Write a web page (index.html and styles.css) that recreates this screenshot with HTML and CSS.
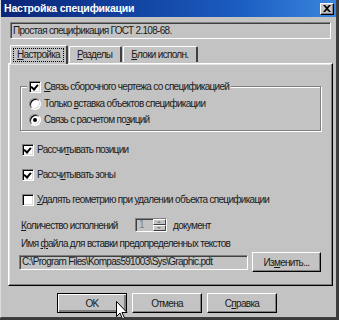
FILE: index.html
```html
<!DOCTYPE html>
<html lang="ru">
<head>
    <meta charset="UTF-8">
    <title>Настройка спецификации</title>
    <link rel="stylesheet" href="styles.css">
</head>
<body>
    <div class="window">
        <div class="titlebar">
            <span class="title">Настройка спецификации</span>
            <span class="close-button">
                <svg width="8" height="7" viewBox="0 0 8 7"><path d="M0 0h2l2 2 2-2h2L5 3.5 8 7H6L4 5 2 7H0l3-3.5z" fill="#000"/></svg>
            </span>
        </div>

        <div class="dialog-body">
            <div class="field spec-field">Простая спецификация ГОСТ 2.108-68.</div>

            <div class="tabs">
                <div class="tab active"><span class="focus"><u>Н</u>астройка</span></div>
                <div class="tab"><u>Р</u>азделы</div>
                <div class="tab"><u>Б</u>локи исполн.</div>
            </div>

            <div class="panel">
                <fieldset class="group">
                    <legend class="option">
                        <span class="checkbox checked"></span>
                        <span><u>С</u>вязь сборочного чертежа со спецификацией</span>
                    </legend>
                    <div class="option radio-row">
                        <span class="radio"></span>
                        <span>Только <u>в</u>ставка объектов спецификации</span>
                    </div>
                    <div class="option radio-row second">
                        <span class="radio selected"></span>
                        <span>Связь с расчетом по<u>з</u>иций</span>
                    </div>
                </fieldset>

                <div class="option check-row">
                    <span class="checkbox checked"></span>
                    <span>Рассчи<u>т</u>ывать позиции</span>
                </div>
                <div class="option check-row">
                    <span class="checkbox checked"></span>
                    <span>Рассч<u>и</u>тывать зоны</span>
                </div>
                <div class="option check-row">
                    <span class="checkbox"></span>
                    <span><u>У</u>далять геометрию при удалении объекта спецификации</span>
                </div>

                <div class="count-row">
                    <span class="count-label"><u>К</u>оличество исполнений</span>
                    <span class="spinner">
                        <span class="spinner-value">1</span>
                        <span class="spinner-arrows">
                            <span class="arrow up"></span>
                            <span class="arrow down"></span>
                        </span>
                    </span>
                    <span>документ</span>
                </div>

                <div class="file-label">Имя <u>ф</u>айла для вставки предопределенных текстов</div>
                <div class="file-row">
                    <div class="field path-field">C:\Program Files\Kompas591003\Sys\Graphic.pdt</div>
                    <div class="button change-button">Из<u>м</u>енить...</div>
                </div>
            </div>

            <div class="buttons">
                <div class="button default">OK</div>
                <div class="button">Отмена</div>
                <div class="button">С<u>п</u>равка</div>
            </div>
        </div>

        <svg class="cursor" width="12" height="19" viewBox="0 0 12 19">
            <path d="M0.5 0.5v15l3.5-3.5 2.5 6 2-1-2.5-5.5h5z" fill="#fff" stroke="#000" stroke-width="1"/>
        </svg>
    </div>
</body>
</html>
```

FILE: styles.css
```css
* {
    margin: 0;
    padding: 0;
    box-sizing: border-box;
}

body {
    font-family: "Liberation Sans", Arial, sans-serif;
    font-size: 10px;
    letter-spacing: -0.7px;
    line-height: 13px;
    color: #1a1a1a;
    background: #3a3a3a;
}

u {
    text-decoration: underline;
    text-underline-offset: 1px;
}

.window {
    position: relative;
    width: 337px;
    height: 318px;
    background: #c3c3c3;
    border-left: 1px solid #dcdcdc;
    border-right: 1px solid #404040;
    border-bottom: 1px solid #404040;
}

.titlebar {
    height: 17px;
    display: flex;
    align-items: center;
    justify-content: space-between;
    padding: 0 2px 0 3px;
    background: linear-gradient(to right, #0a2478, #1a5cc0 70%, #3a86dc);
}

.title {
    color: #fff;
    font-weight: bold;
    font-size: 10.5px;
    letter-spacing: -0.2px;
}

.close-button {
    width: 14px;
    height: 12px;
    display: flex;
    align-items: center;
    justify-content: center;
    background: #c3c3c3;
    border-top: 1px solid #fff;
    border-left: 1px solid #fff;
    border-right: 1px solid #000;
    border-bottom: 1px solid #000;
    box-shadow: inset -1px -1px #808080;
}

.dialog-body {
    padding: 5px 0 0 6px;
}

.field {
    height: 17px;
    padding: 0 2px;
    line-height: 13px;
    white-space: nowrap;
    overflow: hidden;
    border-top: 1px solid #808080;
    border-left: 1px solid #808080;
    border-right: 1px solid #fff;
    border-bottom: 1px solid #fff;
    box-shadow: inset 1px 1px #404040;
    background: #c3c3c3;
}

.spec-field {
    width: 321px;
    margin-left: 3px;
    padding-top: 1px;
}

.tabs {
    display: flex;
    align-items: flex-end;
    height: 19px;
    margin-top: 5px;
    padding-left: 3px;
    position: relative;
    z-index: 1;
}

.tab {
    height: 16px;
    margin-bottom: 1px;
    padding: 1px 8px 0 7px;
    border-top: 1px solid #fff;
    border-left: 1px solid #fff;
    border-right: 2px solid #404040;
    border-radius: 2px 2px 0 0;
    white-space: nowrap;
}

.tab + .tab {
    margin-left: 1px;
}

.tab.active {
    height: 19px;
    margin-bottom: -1px;
    padding: 2px 2px 0;
    background: #c3c3c3;
}

.focus {
    display: inline-block;
    padding: 0 3px;
    border: 1px dotted #000;
    line-height: 12px;
}

.panel {
    width: 325px;
    height: 223px;
    margin-left: 1px;
    padding: 16px 9px 0 11px;
    border-top: 1px solid #fff;
    border-left: 1px solid #fff;
    border-right: 1px solid #000;
    border-bottom: 1px solid #000;
    box-shadow: inset -1px -1px #808080, inset 1px 1px #e4e4e4;
}

.option {
    display: flex;
    align-items: center;
    gap: 3px;
    height: 13px;
    white-space: nowrap;
}

.group {
    width: 301px;
    padding: 0 0 4px 8px;
    border: 1px solid #808080;
    box-shadow: inset 1px 1px #fff, 1px 1px #fff;
}

.group legend {
    margin-left: -2px;
    padding: 0 2px;
    background: #c3c3c3;
}

.radio-row {
    margin-top: 4px;
}

.radio-row.second {
    margin-top: 3px;
}

.checkbox {
    width: 12px;
    height: 12px;
    flex: none;
    position: relative;
    background: #fff;
    border-top: 1px solid #808080;
    border-left: 1px solid #808080;
    border-right: 1px solid #fff;
    border-bottom: 1px solid #fff;
    box-shadow: inset 1px 1px #000, inset -1px -1px #dcdcdc;
}

.checkbox.checked::after {
    content: "";
    position: absolute;
    left: 2px;
    top: 1px;
    width: 3px;
    height: 5px;
    border-right: 2px solid #000;
    border-bottom: 2px solid #000;
    transform: rotate(40deg);
}

.radio {
    width: 12px;
    height: 12px;
    flex: none;
    border-radius: 50%;
    background: #fff;
    border: 1px solid;
    border-color: #808080 #fff #fff #808080;
    box-shadow: inset 1px 1px #000, inset -1px -1px #dcdcdc;
    position: relative;
}

.radio.selected::after {
    content: "";
    position: absolute;
    left: 3px;
    top: 3px;
    width: 4px;
    height: 4px;
    border-radius: 50%;
    background: #000;
}

.check-row {
    margin-left: 2px;
    margin-top: 12px;
}

.check-row + .check-row {
    margin-top: 12px;
}

.count-row {
    display: flex;
    align-items: center;
    height: 14px;
    margin: 12px 0 0 1px;
    white-space: nowrap;
}

.count-label {
    width: 114px;
}

.spinner {
    display: flex;
    width: 32px;
    height: 14px;
    margin-right: 6px;
    border-top: 1px solid #808080;
    border-left: 1px solid #808080;
    border-right: 1px solid #fff;
    border-bottom: 1px solid #fff;
    box-shadow: inset 1px 1px #404040;
}

.spinner-value {
    flex: 1;
    padding-left: 3px;
    color: #808080;
    line-height: 12px;
}

.spinner-arrows {
    display: flex;
    flex-direction: column;
    width: 13px;
}

.arrow {
    flex: 1;
    position: relative;
    border-top: 1px solid #fff;
    border-left: 1px solid #fff;
    border-right: 1px solid #404040;
    border-bottom: 1px solid #404040;
}

.arrow::after {
    content: "";
    position: absolute;
    left: 3px;
    top: 1px;
    border-left: 2px solid transparent;
    border-right: 2px solid transparent;
}

.arrow.up::after {
    border-bottom: 2px solid #808080;
}

.arrow.down::after {
    border-top: 2px solid #808080;
}

.file-label {
    margin: 5px 0 0 1px;
    white-space: nowrap;
}

.file-row {
    display: flex;
    align-items: center;
    gap: 4px;
    height: 20px;
    margin: 2px 0 0 -1px;
}

.path-field {
    width: 229px;
    height: 15px;
    line-height: 12px;
}

.button {
    display: flex;
    align-items: center;
    justify-content: center;
    height: 20px;
    background: #c3c3c3;
    border-top: 1px solid #fff;
    border-left: 1px solid #fff;
    border-right: 1px solid #000;
    border-bottom: 1px solid #000;
    box-shadow: inset -1px -1px #808080;
    white-space: nowrap;
}

.change-button {
    width: 69px;
}

.buttons {
    display: flex;
    gap: 5px;
    margin: 7px 0 0 50px;
}

.buttons .button {
    width: 70px;
}

.button.default {
    border: 1px solid #000;
    box-shadow: inset 1px 1px #fff, inset -2px -2px #808080, inset -1px -1px #000;
}

.cursor {
    position: absolute;
    left: 115px;
    top: 301px;
}
```
